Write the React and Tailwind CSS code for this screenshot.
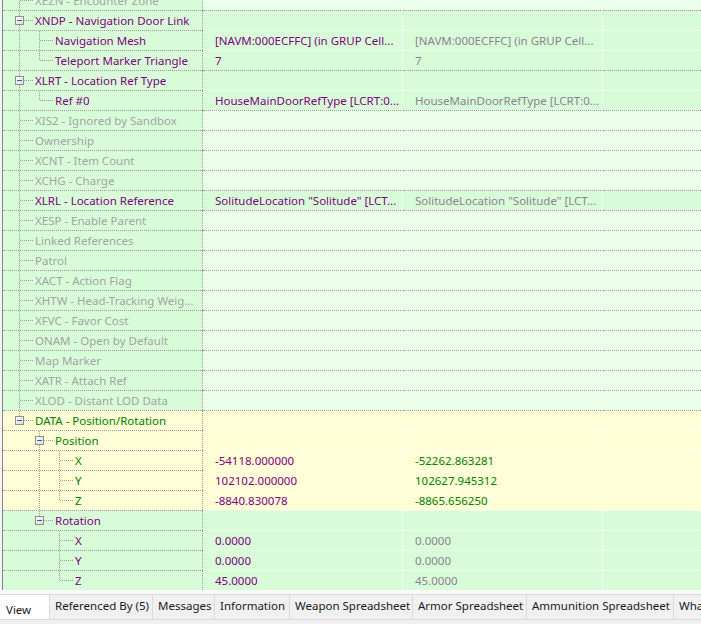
import React from "react";

const PURPLE = "#800080";
const GRAY = "#a3a3a3";
const GREEN = "#008000";
const SAME = "#8b8290";

const BG = {
  g: "bg-[#d8fcd8]",
  l: "bg-[#eafeea]",
  y: "bg-[#fffed6]",
};

// trail: ancestor lines ("|" passes, " " none); end: last child at own level
const rows = [
  { label: "XEZN - Encounter Zone", lvl: 0, trail: [], end: false, c: GRAY, bg: "l" },
  { label: "XNDP - Navigation Door Link", lvl: 0, trail: [], box: true, c: PURPLE, bg: "g" },
  { label: "Navigation Mesh", lvl: 1, trail: ["|"], c: PURPLE, bg: "g", v1: "[NAVM:000ECFFC] (in GRUP Cell...", v2: "[NAVM:000ECFFC] (in GRUP Cell..." },
  { label: "Teleport Marker Triangle", lvl: 1, trail: ["|"], end: true, c: PURPLE, bg: "g", v1: "7", v2: "7" },
  { label: "XLRT - Location Ref Type", lvl: 0, trail: [], box: true, c: PURPLE, bg: "g" },
  { label: "Ref #0", lvl: 1, trail: ["|"], end: true, c: PURPLE, bg: "g", v1: "HouseMainDoorRefType [LCRT:0...", v2: "HouseMainDoorRefType [LCRT:0..." },
  { label: "XIS2 - Ignored by Sandbox", lvl: 0, trail: [], c: GRAY, bg: "l" },
  { label: "Ownership", lvl: 0, trail: [], c: GRAY, bg: "l" },
  { label: "XCNT - Item Count", lvl: 0, trail: [], c: GRAY, bg: "l" },
  { label: "XCHG - Charge", lvl: 0, trail: [], c: GRAY, bg: "l" },
  { label: "XLRL - Location Reference", lvl: 0, trail: [], c: PURPLE, bg: "g", v1: 'SolitudeLocation "Solitude" [LCT...', v2: 'SolitudeLocation "Solitude" [LCT...' },
  { label: "XESP - Enable Parent", lvl: 0, trail: [], c: GRAY, bg: "l" },
  { label: "Linked References", lvl: 0, trail: [], c: GRAY, bg: "l" },
  { label: "Patrol", lvl: 0, trail: [], c: GRAY, bg: "l" },
  { label: "XACT - Action Flag", lvl: 0, trail: [], c: GRAY, bg: "l" },
  { label: "XHTW - Head-Tracking Weig...", lvl: 0, trail: [], c: GRAY, bg: "l" },
  { label: "XFVC - Favor Cost", lvl: 0, trail: [], c: GRAY, bg: "l" },
  { label: "ONAM - Open by Default", lvl: 0, trail: [], c: GRAY, bg: "l" },
  { label: "Map Marker", lvl: 0, trail: [], c: GRAY, bg: "l" },
  { label: "XATR - Attach Ref", lvl: 0, trail: [], c: GRAY, bg: "l" },
  { label: "XLOD - Distant LOD Data", lvl: 0, trail: [], c: GRAY, bg: "l" },
  { label: "DATA - Position/Rotation", lvl: 0, trail: [], end: true, box: true, c: GREEN, bg: "y", col1: "y" },
  { label: "Position", lvl: 1, trail: [" "], box: true, c: GREEN, bg: "y", col1: "y" },
  { label: "X", lvl: 2, trail: [" ", "|"], c: GREEN, bg: "y", col1: "y", v1: "-54118.000000", v2: "-52262.863281", c2: GREEN },
  { label: "Y", lvl: 2, trail: [" ", "|"], c: GREEN, bg: "y", col1: "y", v1: "102102.000000", v2: "102627.945312", c2: GREEN },
  { label: "Z", lvl: 2, trail: [" ", "|"], end: true, c: GREEN, bg: "y", col1: "y", v1: "-8840.830078", v2: "-8865.656250", c2: GREEN },
  { label: "Rotation", lvl: 1, trail: [" "], end: true, box: true, c: PURPLE, bg: "g" },
  { label: "X", lvl: 2, trail: [" ", " "], c: PURPLE, bg: "g", v1: "0.0000", v2: "0.0000" },
  { label: "Y", lvl: 2, trail: [" ", " "], c: PURPLE, bg: "g", v1: "0.0000", v2: "0.0000" },
  { label: "Z", lvl: 2, trail: [" ", " "], end: true, c: PURPLE, bg: "g", v1: "45.0000", v2: "45.0000" },
];

const DOT = "#9a9a9a";

function TreeLines({ row }) {
  const w = 32 + row.lvl * 20;
  const own = 16.5 + row.lvl * 20;
  return (
    <svg width={w} height="19" className="shrink-0" shapeRendering="crispEdges">
      {row.trail.map((t, i) =>
        t === "|" ? (
          <line key={i} x1={16.5 + i * 20} y1="0" x2={16.5 + i * 20} y2="19" stroke={DOT} strokeDasharray="1 1" />
        ) : null
      )}
      <line x1={own} y1="0" x2={own} y2={row.end ? 10 : 19} stroke={DOT} strokeDasharray="1 1" />
      <line x1={own} y1="9.5" x2={own + 13} y2="9.5" stroke={DOT} strokeDasharray="1 1" />
      {row.box && (
        <g>
          <defs>
            <linearGradient id="bx" x1="0" y1="0" x2="1" y2="1">
              <stop offset="0" stopColor="#ffffff" />
              <stop offset="1" stopColor="#d9d9d9" />
            </linearGradient>
          </defs>
          <rect x={own - 4} y="5.5" width="8" height="8" fill="url(#bx)" stroke="#8f8f8f" />
          <line x1={own - 2.5} y1="9.5" x2={own + 2.5} y2="9.5" stroke="#3b5a9a" />
        </g>
      )}
    </svg>
  );
}

function Row({ row }) {
  const top = row.lvl === 0 ? "border-[#9a9a9a]" : "border-white";
  const bg = BG[row.bg];
  const bg1 = BG[row.col1 || "g"];
  return (
    <div className="flex h-[20px] shrink-0">
      <div className={`w-[200px] shrink-0 flex items-center border-t border-r border-dotted border-[#9a9a9a] overflow-hidden whitespace-nowrap ${bg1}`}>
        <TreeLines row={row} />
        <span className="leading-[19px]" style={{ color: row.c }}>{row.label}</span>
      </div>
      <div className={`w-[200px] shrink-0 border-t border-r border-dotted ${top} border-r-white pl-[12px] leading-[19px] overflow-hidden whitespace-nowrap text-[#800080] ${bg}`}>
        {row.v1}
      </div>
      <div className={`w-[200px] shrink-0 border-t border-r border-dotted ${top} border-r-white pl-[12px] leading-[19px] overflow-hidden whitespace-nowrap ${bg}`} style={{ color: row.c2 || SAME }}>
        {row.v2}
      </div>
      <div className={`flex-1 border-t border-dotted ${top} ${bg}`} />
    </div>
  );
}

const tabs = [
  { t: "Referenced By (5)", w: "w-[103px]" },
  { t: "Messages", w: "w-[62px]" },
  { t: "Information", w: "w-[75px]" },
  { t: "Weapon Spreadsheet", w: "w-[123px]" },
  { t: "Armor Spreadsheet", w: "w-[114px]" },
  { t: "Ammunition Spreadsheet", w: "w-[147px]" },
  { t: "What's New", w: "w-[80px]" },
];

export default function App() {
  return (
    <div
      className="w-[701px] h-[624px] flex flex-col overflow-hidden bg-[#f0f0f0] text-[11.5px]"
      style={{ fontFamily: '"Noto Sans", "Open Sans", sans-serif' }}
    >
      <div className="h-[590px] shrink-0 pl-[2px] bg-[#f4f4f4] overflow-hidden">
        <div className="h-full border-l border-[#828790] overflow-hidden">
          <div className="-mt-[10px] flex flex-col">
            {rows.map((r, i) => (
              <Row key={i} row={r} />
            ))}
          </div>
        </div>
      </div>
      <div className="h-[5px] shrink-0 bg-[#f9f9f9] border-b border-[#dadada]" />
      <div className="h-[24px] shrink-0 flex text-[11.5px] text-[#1a1a1a] overflow-hidden whitespace-nowrap">
        <div className="w-[49px] shrink-0 bg-white pl-[6px] pt-[5px] leading-[19px]">View</div>
        {tabs.map((tb) => (
          <div key={tb.t} className={`${tb.w} shrink-0 border-l border-[#dadada] bg-[#f0f0f0] pl-[5px] leading-[21px]`}>
            {tb.t}
          </div>
        ))}
      </div>
      <div className="flex-1 border-t border-[#dadada] bg-[#f0f0f0]" />
    </div>
  );
}
